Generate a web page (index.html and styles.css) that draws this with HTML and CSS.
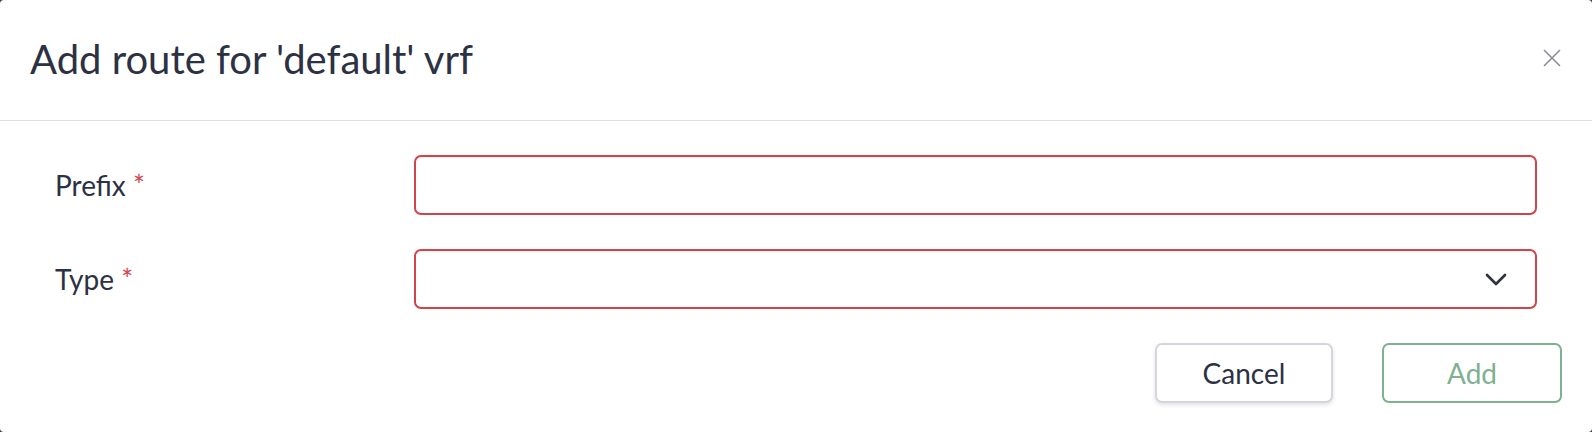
FILE: index.html
```html
<!DOCTYPE html>
<html>
<head>
<meta charset="utf-8">
<link rel="stylesheet" href="styles.css">
</head>
<body>
<div class="modal">
  <div class="modal-header">
    <h1 class="modal-title">Add route for 'default' vrf</h1>
    <button class="close" aria-label="Close">
      <svg width="18" height="18" viewBox="0 0 18 18"><path d="M1 1L17 17M17 1L1 17" stroke="#8a8d93" stroke-width="1.6" fill="none"/></svg>
    </button>
  </div>
  <div class="modal-body">
    <div class="form-row">
      <label class="form-label">Prefix <span class="req">*</span></label>
      <div class="form-control"><input class="input invalid" type="text"></div>
    </div>
    <div class="form-row">
      <label class="form-label">Type <span class="req">*</span></label>
      <div class="form-control">
        <div class="select invalid">
          <svg class="chevron" width="22" height="13" viewBox="0 0 22 13"><path d="M2 2L11 11L20 2" stroke="#2f3238" stroke-width="2.6" fill="none" stroke-linecap="round" stroke-linejoin="round"/></svg>
        </div>
      </div>
    </div>
  </div>
  <div class="modal-footer">
    <button class="btn btn-cancel">Cancel</button>
    <button class="btn btn-add">Add</button>
  </div>
</div>
</body>
</html>
```

FILE: styles.css
```css
* { box-sizing: border-box; }
html, body { margin: 0; padding: 0; }
body {
  background: #3a3d44;
  font-family: Lato, "Noto Sans", sans-serif;
  color: #2c3143;
  width: 1592px;
  height: 432px;
  overflow: hidden;
}
.modal {
  background: #fff;
  width: 1592px;
  height: 432px;
  border-radius: 4px;
  display: flex;
  flex-direction: column;
}
.modal-header {
  height: 121px;
  border-bottom: 1px solid #dcdfe4;
  display: flex;
  align-items: center;
  justify-content: space-between;
  padding: 0 30px 0 30px;
}
.modal-title {
  margin: 0;
  font-size: 40px;
  font-weight: 400;
  line-height: 48px;
  color: #2c3143;
  padding-bottom: 2px;
}
.close {
  border: 0;
  background: none;
  padding: 0;
  width: 18px;
  height: 18px;
  margin-right: 1px;
  margin-bottom: 4px;
  display: flex;
}
.modal-body {
  padding: 34px 55px 0 55px;
  display: flex;
  flex-direction: column;
  gap: 34px;
}
.form-row {
  display: flex;
  align-items: center;
  height: 60px;
}
.form-label {
  width: 359px;
  font-size: 28px;
  color: #2c3143;
}
.req { color: #d0454c; }
.form-control { flex: 1; }
.input, .select {
  display: block;
  width: 100%;
  height: 60px;
  border: 2px solid #d0454c;
  border-radius: 7px;
  background: #fff;
  box-shadow: inset 0 1px 2px rgba(0,0,0,0.06);
  outline: none;
}
.select {
  display: flex;
  align-items: center;
  justify-content: flex-end;
  padding-right: 28px;
}
.chevron { display: block; }
.modal-footer {
  display: flex;
  justify-content: flex-end;
  gap: 49px;
  padding: 34px 30px 0 0;
}
.btn {
  height: 60px;
  font-family: Lato, "Noto Sans", sans-serif;
  font-size: 28px;
  border-radius: 7px;
  background: #fff;
}
.btn-cancel {
  width: 178px;
  border: 2px solid #d3d7dd;
  color: #2c3143;
  box-shadow: 0 2px 4px rgba(0,0,0,0.12);
}
.btn-add {
  width: 180px;
  border: 2px solid #7db192;
  color: #7db192;
}
```
